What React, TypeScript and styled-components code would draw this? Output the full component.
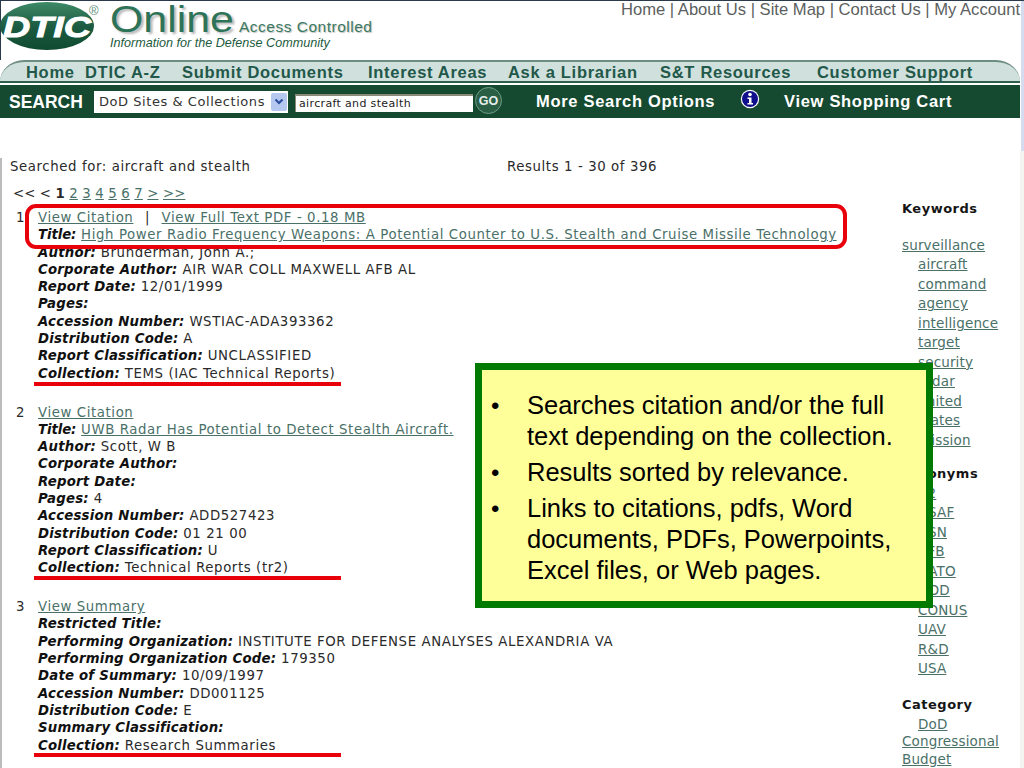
import React from "react";
import styled, { createGlobalStyle } from "styled-components";

const Global = createGlobalStyle`
  html, body { margin: 0; padding: 0; background: #fff; overflow: hidden; }
  body { font-family: "DejaVu Sans", Verdana, sans-serif; }
`;

const Page = styled.div`
  position: relative;
  width: 1024px;
  height: 768px;
  overflow: hidden;
  background: #fff;
  border-top: 1px solid #2a3a4a;
  box-sizing: border-box;
`;

const RightStrip = styled.div`
  position: absolute;
  top: 150px;
  right: 0;
  bottom: 0;
  width: 4px;
  background: #f4f4f2;
`;

const RightEdge = styled.div`
  position: absolute;
  top: 0;
  right: 0;
  height: 150px;
  width: 3px;
  background: #d6dcf0;
`;

const Header = styled.header`
  height: 59px;
  display: flex;
  justify-content: space-between;
  align-items: flex-start;
  box-shadow: inset 1px 0 0 #2a3a4a;
`;

const Brand = styled.div`
  display: flex;
  align-items: flex-start;
  gap: 6px;
`;

const BrandText = styled.div`
  display: flex;
  flex-direction: column;
  margin-top: 3px;
  color: #2c6b52;
  font-family: "Liberation Sans", Arial, sans-serif;
`;

const BrandTop = styled.div`
  display: flex;
  align-items: baseline;
  height: 32px;
`;

const OnlineWord = styled.span`
  display: inline-block;
  width: 103px;
  margin-right: 26px;
  font-size: 36px;
  line-height: 32px;
  color: #2d7358;
  transform: scaleX(1.19);
  transform-origin: left center;
  text-shadow: 2px 2px 2px #b9b9b9;
`;

const AccessWord = styled.span`
  font-size: 15.5px;
  color: #3d7a62;
  letter-spacing: 0.5px;
  text-shadow: 1px 1px 1px #c2c2c2;
`;

const Tagline = styled.span`
  font-size: 12.6px;
  font-style: italic;
  color: #1c5a40;
  line-height: 15px;
`;

const UtilLinks = styled.div`
  font-family: "Liberation Sans", Arial, sans-serif;
  font-size: 16.6px;
  line-height: 18px;
  color: #5c5f60;
  padding-right: 4px;
`;

const Nav = styled.nav`
  height: 23px;
  margin: 0 4px 0 0;
  display: grid;
  grid-template-columns: 59px 97px 186px 140px 152px 157px auto;
  padding: 1px 0 0 26px;
  align-items: center;
  box-sizing: border-box;
  background: #d0e0dc;
  border-top: 2px solid #6d8d83;
  border-bottom: 2px solid #2f5f4a;
  border-radius: 24px 24px 0 0 / 22px 22px 0 0;
  font-family: "Liberation Sans", Arial, sans-serif;
  font-weight: 700;
  font-size: 16.5px;
  letter-spacing: 0.7px;
  color: #22584a;
  white-space: nowrap;
`;

const SearchBar = styled.div`
  height: 33px;
  margin: 2px 4px 0 0;
  display: grid;
  grid-template-columns: 85px 201px 180px 61px 205px 43px auto;
  padding-left: 9px;
  align-items: center;
  background: #154a31;
  color: #fff;
  font-family: "Liberation Sans", Arial, sans-serif;
  font-weight: 700;
  white-space: nowrap;
`;

const SearchLabel = styled.span`
  font-size: 17.5px;
  padding-top: 2px;
`;

const SelectBox = styled.div`
  width: 194px;
  height: 22px;
  box-sizing: border-box;
  background: #fff;
  display: flex;
  align-items: center;
  justify-content: space-between;
  padding: 0 1px 0 5px;
  font-family: "DejaVu Sans", Verdana, sans-serif;
  font-weight: 400;
  font-size: 13px;
  letter-spacing: 0.55px;
  color: #333;
`;

const SelectArrow = styled.span`
  width: 16px;
  height: 18px;
  border-radius: 2px;
  background: #b4c8f0;
  display: flex;
  align-items: center;
  justify-content: center;
`;

const SearchInput = styled.div`
  width: 178px;
  height: 18px;
  margin-top: 3px;
  box-sizing: border-box;
  background: #fff;
  border-top: 2px solid #8a8a78;
  border-left: 1px solid #8a8a78;
  padding-left: 3px;
  font-family: "DejaVu Sans", Verdana, sans-serif;
  font-weight: 400;
  font-size: 11px;
  letter-spacing: 0.35px;
  line-height: 16px;
  color: #222;
`;

const GoButton = styled.div`
  width: 27px;
  height: 27px;
  margin-top: -2px;
  border-radius: 50%;
  background: #2a5f46;
  border: 1px solid #6f9c87;
  box-sizing: border-box;
  display: flex;
  align-items: center;
  justify-content: center;
  font-size: 12.5px;
  color: #e6efe9;
`;

const BarLink = styled.span`
  font-size: 16.5px;
  letter-spacing: 0.7px;
`;

const InfoIcon = styled.span`
  display: flex;
  margin: -5px 0 0 -1px;
`;

const Content = styled.main`
  display: grid;
  grid-template-columns: 900px 1fr;
  margin-top: 40px;
  border-left: 2px solid #bcbcbc;
  height: 620px;
  font-size: 13.3px;
  color: #2a2a2a;
  letter-spacing: 0.6px;
`;

const Results = styled.section`
  padding-left: 8px;
`;

const SummaryLine = styled.div`
  display: grid;
  grid-template-columns: 497px auto;
  height: 18px;
  line-height: 18px;
`;

const Pager = styled.div`
  margin: 9px 0 0 3px;
  line-height: 18px;
  height: 18px;
  letter-spacing: 0.05px;
  word-spacing: 0.2px;
`;

const PagerLink = styled.a`
  color: #4a7068;
  text-decoration: underline;
`;

const ResultList = styled.div`
  display: flex;
  flex-direction: column;
  margin-top: 6px;
`;

const ResultRow = styled.article`
  position: relative;
  display: grid;
  grid-template-columns: 22px 1fr;
  height: 194.6px;
  padding-left: 6px;
  line-height: 17.3px;
  white-space: nowrap;
`;

const Num = styled.span``;

const Fields = styled.div``;

const Field = styled.div`
  height: 17.3px;
`;

const Label = styled.b<{ $tight?: boolean }>`
  font-weight: 700;
  font-style: italic;
  color: #111;
  letter-spacing: ${(p) => (p.$tight ? -0.1 : 0.2)}px;
`;

const Link = styled.a`
  color: #4a7068;
  text-decoration: underline;
`;

const Sep = styled.span`
  margin: 0 11.5px;
`;

const RedBox = styled.div`
  position: absolute;
  left: 25px;
  top: 203px;
  width: 822px;
  height: 45px;
  box-sizing: border-box;
  border: 4px solid #e8000b;
  border-radius: 11px;
`;

const RedLine = styled.div<{ $top: number }>`
  position: absolute;
  left: 34px;
  width: 307px;
  top: ${(p) => p.$top}px;
  height: 3.5px;
  background: #e8000b;
`;

const Side = styled.aside`
  margin-top: 42px;
  font-size: 13.5px;
  letter-spacing: 0.15px;
  color: #4a7068;
`;

const SideHead = styled.div<{ $gap: number }>`
  font-weight: 700;
  color: #151515;
  font-size: 13px;
  letter-spacing: 0.5px;
  line-height: 18px;
  margin-bottom: ${(p) => p.$gap}px;
`;

const SideLink = styled.a<{ $indent?: boolean; $tight?: boolean }>`
  display: block;
  color: #4a7068;
  text-decoration: underline;
  line-height: ${(p) => (p.$tight ? 17.5 : 19.45)}px;
  padding-left: ${(p) => (p.$indent ? 16 : 0)}px;
`;

const SideGroup = styled.div<{ $gap: number }>`
  margin-bottom: ${(p) => p.$gap}px;
`;

const Callout = styled.div`
  position: absolute;
  left: 475px;
  top: 362px;
  width: 458px;
  height: 245px;
  box-sizing: border-box;
  background: #ffff99;
  border: 7px solid #007a00;
  padding: 20px 30px 0 9px;
  font-family: "Liberation Sans", Arial, sans-serif;
  font-size: 25.5px;
  line-height: 31px;
  color: #000;
`;

const BulletList = styled.ul`
  list-style: none;
  margin: 0;
  padding: 0;
  display: flex;
  flex-direction: column;
  gap: 5px;
`;

const Bullet = styled.li`
  display: grid;
  grid-template-columns: 36px 1fr;
`;

const Dot = styled.span`
  font-size: 24px;
`;

const Logo = () => (
  <svg width="104" height="56" viewBox="0 0 104 56" style={{ display: "block" }}>
    <defs>
      <linearGradient id="lg" x1="0" y1="0" x2="0" y2="1">
        <stop offset="0" stopColor="#3f8a68" />
        <stop offset="0.5" stopColor="#1d5c42" />
        <stop offset="1" stopColor="#0f4a30" />
      </linearGradient>
    </defs>
    <ellipse cx="47" cy="25" rx="47" ry="24" fill="url(#lg)" />
    <text x="3" y="36" fill="#fff" stroke="#fff" strokeWidth="0.9" fontFamily="Liberation Sans" fontWeight="700" fontStyle="italic" fontSize="29" textLength="88" lengthAdjust="spacingAndGlyphs">DTIC</text>
    <text x="89" y="14" fill="#5f8f7a" fontFamily="Liberation Sans" fontSize="13">®</text>
  </svg>
);

const Chevron = () => (
  <svg width="10" height="8" viewBox="0 0 10 8">
    <path d="M1.5 1.5 L5 5 L8.5 1.5" fill="none" stroke="#2c4f9e" strokeWidth="2.2" />
  </svg>
);

const Info = () => (
  <svg width="20" height="20" viewBox="0 0 20 20">
    <circle cx="10" cy="10" r="9.2" fill="#fff" />
    <circle cx="10" cy="10" r="8" fill="#10108c" />
    <circle cx="10" cy="5.5" r="1.8" fill="#fff" />
    <path d="M7.5 8.5 H11.5 V14 H13 V15.5 H7.5 V14 H9 V10 H7.5 Z" fill="#fff" />
  </svg>
);

type Row = [string, string];

const rows: { num: string; head: React.ReactNode; fields: Row[] }[] = [
  {
    num: "1",
    head: (
      <>
        <Link>View Citation</Link>
        <Sep>|</Sep>
        <Link>View Full Text PDF - 0.18 MB</Link>
      </>
    ),
    fields: [
      ["Title:", "High Power Radio Frequency Weapons: A Potential Counter to U.S. Stealth and Cruise Missile Technology"],
      ["Author:", "Brunderman, John A.;"],
      ["Corporate Author:", "AIR WAR COLL MAXWELL AFB AL"],
      ["Report Date:", "12/01/1999"],
      ["Pages:", ""],
      ["Accession Number:", "WSTIAC-ADA393362"],
      ["Distribution Code:", "A"],
      ["Report Classification:", "UNCLASSIFIED"],
      ["Collection:", "TEMS (IAC Technical Reports)"],
    ],
  },
  {
    num: "2",
    head: <Link>View Citation</Link>,
    fields: [
      ["Title:", "UWB Radar Has Potential to Detect Stealth Aircraft."],
      ["Author:", "Scott, W B"],
      ["Corporate Author:", ""],
      ["Report Date:", ""],
      ["Pages:", "4"],
      ["Accession Number:", "ADD527423"],
      ["Distribution Code:", "01 21 00"],
      ["Report Classification:", "U"],
      ["Collection:", "Technical Reports (tr2)"],
    ],
  },
  {
    num: "3",
    head: <Link>View Summary</Link>,
    fields: [
      ["Restricted Title:", ""],
      ["Performing Organization:", "INSTITUTE FOR DEFENSE ANALYSES ALEXANDRIA VA"],
      ["Performing Organization Code:", "179350"],
      ["Date of Summary:", "10/09/1997"],
      ["Accession Number:", "DD001125"],
      ["Distribution Code:", "E"],
      ["Summary Classification:", ""],
      ["Collection:", "Research Summaries"],
    ],
  },
];

const keywords = ["aircraft", "command", "agency", "intelligence", "target", "security", "radar", "united", "states", "mission"];
const acronyms = ["C2", "USAF", "USN", "AFB", "NATO", "DOD", "CONUS", "UAV", "R&D", "USA"];

export default function App() {
  return (
    <Page>
      <Global />
      <Header>
        <Brand>
          <Logo />
          <BrandText>
            <BrandTop>
              <OnlineWord>Online</OnlineWord>
              <AccessWord>Access Controlled</AccessWord>
            </BrandTop>
            <Tagline>Information for the Defense Community</Tagline>
          </BrandText>
        </Brand>
        <UtilLinks>Home | About Us | Site Map | Contact Us | My Account</UtilLinks>
      </Header>
      <Nav>
        <span>Home</span>
        <span>DTIC A-Z</span>
        <span>Submit Documents</span>
        <span>Interest Areas</span>
        <span>Ask a Librarian</span>
        <span>S&amp;T Resources</span>
        <span>Customer Support</span>
      </Nav>
      <SearchBar>
        <SearchLabel>SEARCH</SearchLabel>
        <SelectBox>
          DoD Sites &amp; Collections
          <SelectArrow>
            <Chevron />
          </SelectArrow>
        </SelectBox>
        <SearchInput>aircraft and stealth</SearchInput>
        <GoButton>GO</GoButton>
        <BarLink>More Search Options</BarLink>
        <InfoIcon>
          <Info />
        </InfoIcon>
        <BarLink>View Shopping Cart</BarLink>
      </SearchBar>
      <Content>
        <Results>
          <SummaryLine>
            <span>Searched for: aircraft and stealth</span>
            <span>Results 1 - 30 of 396</span>
          </SummaryLine>
          <Pager>
            &lt;&lt; &lt; <b>1</b> <PagerLink>2</PagerLink> <PagerLink>3</PagerLink> <PagerLink>4</PagerLink>{" "}
            <PagerLink>5</PagerLink> <PagerLink>6</PagerLink> <PagerLink>7</PagerLink> <PagerLink>&gt;</PagerLink>{" "}
            <PagerLink>&gt;&gt;</PagerLink>
          </Pager>
          <ResultList>
            {rows.map((r) => (
              <ResultRow key={r.num}>
                <Num>{r.num}</Num>
                <Fields>
                  <Field>{r.head}</Field>
                  {r.fields.map(([l, v]) => (
                    <Field key={l}>
                      <Label $tight={l === "Title:"}>{l}</Label>{" "}
                      {l === "Title:" ? <Link>{v}</Link> : v}
                    </Field>
                  ))}
                </Fields>
              </ResultRow>
            ))}
          </ResultList>
        </Results>
        <Side>
          <SideHead $gap={18}>Keywords</SideHead>
          <SideGroup $gap={15}>
            <SideLink>surveillance</SideLink>
            {keywords.map((k) => (
              <SideLink $indent key={k}>
                {k}
              </SideLink>
            ))}
          </SideGroup>
          <SideHead $gap={1}>Acronyms</SideHead>
          <SideGroup $gap={17}>
            {acronyms.map((k) => (
              <SideLink $indent key={k}>
                {k}
              </SideLink>
            ))}
          </SideGroup>
          <SideHead $gap={2}>Category</SideHead>
          <SideLink $indent $tight>DoD</SideLink>
          <SideLink $tight>Congressional</SideLink>
          <SideLink $tight>Budget</SideLink>
        </Side>
      </Content>
      <RightEdge />
      <RightStrip />
      <RedBox />
      <RedLine $top={381} />
      <RedLine $top={575} />
      <RedLine $top={752} />
      <Callout>
        <BulletList>
          <Bullet>
            <Dot>•</Dot>
            <span>Searches citation and/or the full text depending on the collection.</span>
          </Bullet>
          <Bullet>
            <Dot>•</Dot>
            <span>Results sorted by relevance.</span>
          </Bullet>
          <Bullet>
            <Dot>•</Dot>
            <span>Links to citations, pdfs, Word documents, PDFs, Powerpoints, Excel files, or Web pages.</span>
          </Bullet>
        </BulletList>
      </Callout>
    </Page>
  );
}
